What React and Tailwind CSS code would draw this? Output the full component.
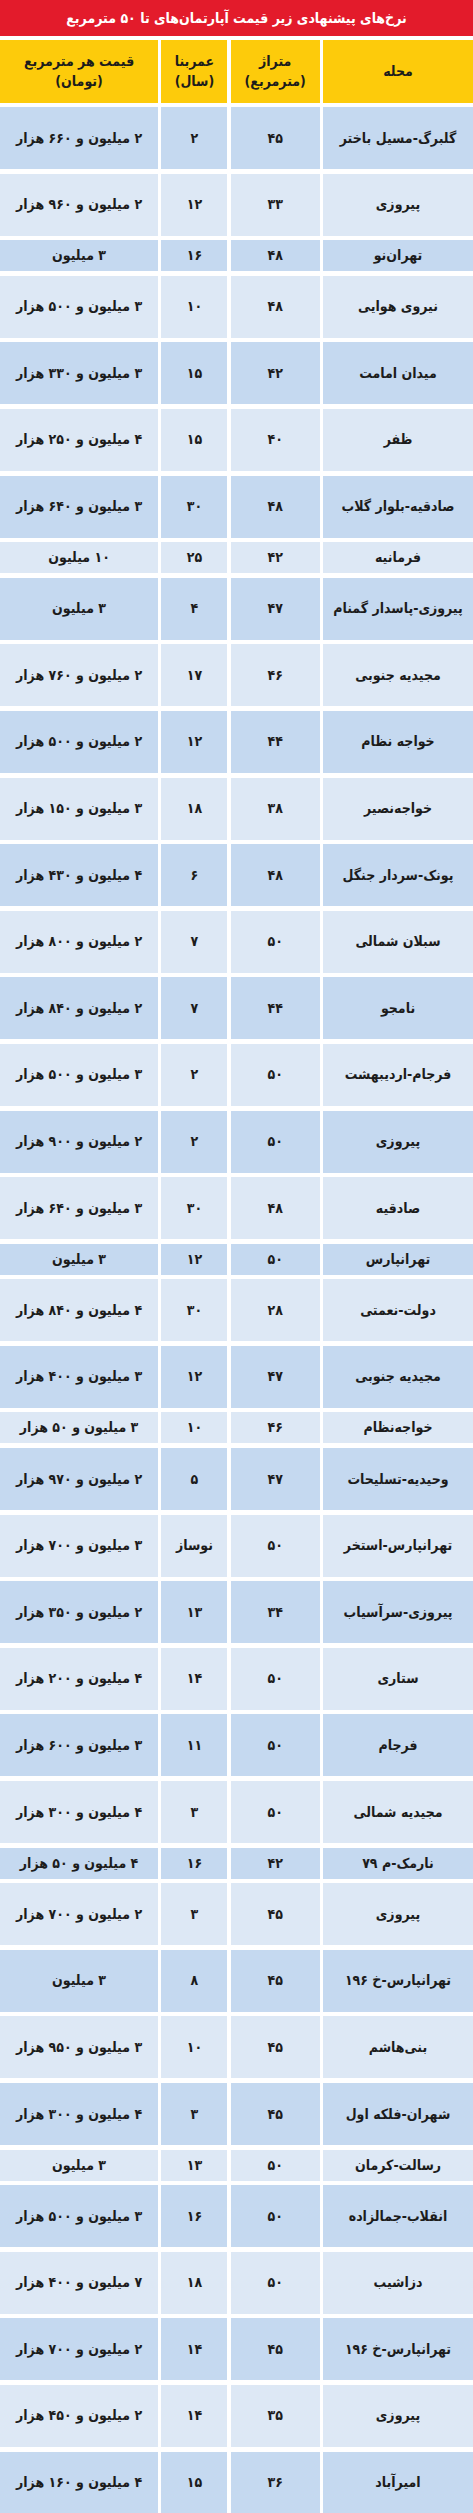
const ROWS = [
  ['گلبرگ-مسیل باختر', '۴۵', '۲', '۲ میلیون و ۶۶۰ هزار'],
  ['پیروزی', '۳۳', '۱۲', '۲ میلیون و ۹۶۰ هزار'],
  ['تهران‌نو', '۴۸', '۱۶', '۳ میلیون', true],
  ['نیروی هوایی', '۴۸', '۱۰', '۳ میلیون و ۵۰۰ هزار'],
  ['میدان امامت', '۴۲', '۱۵', '۳ میلیون و ۳۳۰ هزار'],
  ['ظفر', '۴۰', '۱۵', '۴ میلیون و ۲۵۰ هزار'],
  ['صادقیه-بلوار گلاب', '۴۸', '۳۰', '۳ میلیون و ۶۴۰ هزار'],
  ['فرمانیه', '۴۲', '۲۵', '۱۰ میلیون', true],
  ['پیروزی-پاسدار گمنام', '۴۷', '۴', '۳ میلیون'],
  ['مجیدیه جنوبی', '۴۶', '۱۷', '۲ میلیون و ۷۶۰ هزار'],
  ['خواجه نظام', '۴۴', '۱۲', '۲ میلیون و ۵۰۰ هزار'],
  ['خواجه‌نصیر', '۳۸', '۱۸', '۳ میلیون و ۱۵۰ هزار'],
  ['پونک-سردار جنگل', '۴۸', '۶', '۴ میلیون و ۴۳۰ هزار'],
  ['سبلان شمالی', '۵۰', '۷', '۲ میلیون و ۸۰۰ هزار'],
  ['نامجو', '۴۴', '۷', '۲ میلیون و ۸۴۰ هزار'],
  ['فرجام-اردیبهشت', '۵۰', '۲', '۳ میلیون و ۵۰۰ هزار'],
  ['پیروزی', '۵۰', '۲', '۲ میلیون و ۹۰۰ هزار'],
  ['صادقیه', '۴۸', '۳۰', '۳ میلیون و ۶۴۰ هزار'],
  ['تهرانپارس', '۵۰', '۱۲', '۳ میلیون', true],
  ['دولت-نعمتی', '۲۸', '۳۰', '۴ میلیون و ۸۴۰ هزار'],
  ['مجیدیه جنوبی', '۴۷', '۱۲', '۳ میلیون و ۴۰۰ هزار'],
  ['خواجه‌نظام', '۴۶', '۱۰', '۳ میلیون و ۵۰ هزار', true],
  ['وحیدیه-تسلیحات', '۴۷', '۵', '۲ میلیون و ۹۷۰ هزار'],
  ['تهرانپارس-استخر', '۵۰', 'نوساز', '۳ میلیون و ۷۰۰ هزار'],
  ['پیروزی-سرآسیاب', '۳۴', '۱۳', '۲ میلیون و ۳۵۰ هزار'],
  ['ستاری', '۵۰', '۱۴', '۴ میلیون و ۲۰۰ هزار'],
  ['فرجام', '۵۰', '۱۱', '۳ میلیون و ۶۰۰ هزار'],
  ['مجیدیه شمالی', '۵۰', '۳', '۴ میلیون و ۳۰۰ هزار'],
  ['نارمک-م ۷۹', '۴۲', '۱۶', '۴ میلیون و ۵۰ هزار', true],
  ['پیروزی', '۴۵', '۳', '۲ میلیون و ۷۰۰ هزار'],
  ['تهرانپارس-خ ۱۹۶', '۴۵', '۸', '۳ میلیون'],
  ['بنی‌هاشم', '۴۵', '۱۰', '۳ میلیون و ۹۵۰ هزار'],
  ['شهران-فلکه اول', '۴۵', '۳', '۴ میلیون و ۳۰۰ هزار'],
  ['رسالت-کرمان', '۵۰', '۱۳', '۳ میلیون', true],
  ['انقلاب-جمالزاده', '۵۰', '۱۶', '۳ میلیون و ۵۰۰ هزار'],
  ['دزاشیب', '۵۰', '۱۸', '۷ میلیون و ۴۰۰ هزار'],
  ['تهرانپارس-خ ۱۹۶', '۴۵', '۱۴', '۲ میلیون و ۷۰۰ هزار'],
  ['پیروزی', '۳۵', '۱۴', '۲ میلیون و ۴۵۰ هزار'],
  ['امیرآباد', '۳۶', '۱۵', '۴ میلیون و ۱۶۰ هزار'],
]

const grid = 'grid grid-cols-[150px_89px_66px_1fr] gap-x-[3.3px]'

export default function App() {
  return (
    <div dir="rtl" className="w-[473px] bg-white font-['DejaVu_Sans_Condensed','DejaVu_Sans',sans-serif] text-[#1c1c1c]">
      {/* Title */}
      <div className="h-9 bg-[#e31b2b] flex items-center justify-center text-white font-bold text-[14px] whitespace-nowrap">
        نرخ‌های پیشنهادی زیر قیمت آپارتمان‌های تا ۵۰ مترمربع
      </div>

      {/* Header */}
      <div className={`${grid} mt-1 h-[63px] font-bold text-[14px] leading-[1.4]`}>
        <div className="bg-[#fdcb0b] flex items-center justify-center">محله</div>
        <div className="bg-[#fdcb0b] flex flex-col items-center justify-center">
          <span>متراژ</span>
          <span>(مترمربع)</span>
        </div>
        <div className="bg-[#fdcb0b] flex flex-col items-center justify-center">
          <span>عمربنا</span>
          <span>(سال)</span>
        </div>
        <div className="bg-[#fdcb0b] flex flex-col items-center justify-center">
          <span>قیمت هر مترمربع</span>
          <span>(تومان)</span>
        </div>
      </div>

      {/* Rows */}
      <div className="flex flex-col gap-[4.6px] mt-1 font-bold text-[14px]">
        {ROWS.map(([name, area, age, price, short], i) => {
          const bg = i % 2 === 0 ? 'bg-[#c5d9f0]' : 'bg-[#dde8f5]'
          const h = short ? 'h-[31px]' : 'h-[62px]'
          return (
            <div key={i} className={`${grid} ${h}`}>
              {[name, area, age, price].map((v, j) => (
                <div key={j} className={`${bg} flex items-center justify-center whitespace-nowrap`}>
                  {v}
                </div>
              ))}
            </div>
          )
        })}
      </div>
    </div>
  )
}
